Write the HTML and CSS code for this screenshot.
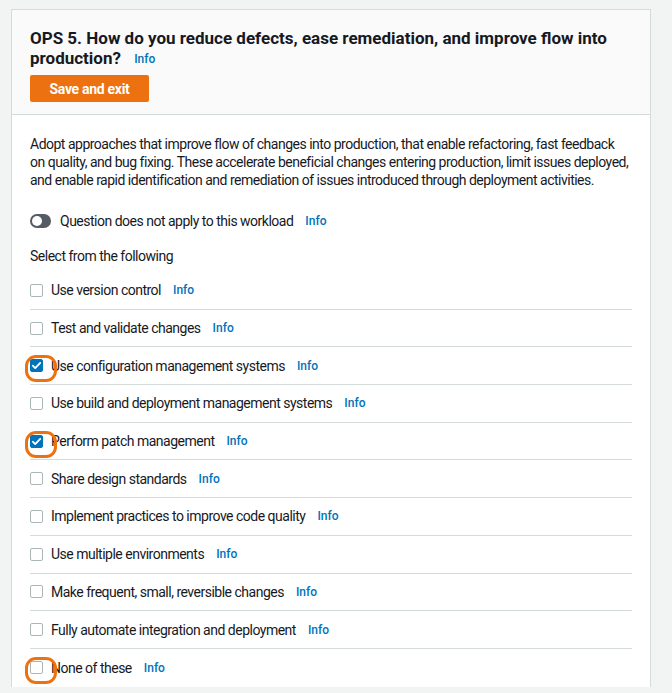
FILE: index.html
```html
<!DOCTYPE html>
<html>
<head>
<meta charset="utf-8">
<link rel="stylesheet" href="styles.css">
</head>
<body>
<div class="page">
  <section class="card">
    <header class="card-head">
      <h2 class="title">OPS 5. How do you reduce defects, ease remediation, and improve flow into production? <a class="info" href="#">Info</a></h2>
      <button class="btn-primary">Save and exit</button>
    </header>
    <div class="card-body">
      <p class="desc">Adopt approaches that improve flow of changes into production, that enable refactoring, fast feedback on quality, and bug fixing. These accelerate beneficial changes entering production, limit issues deployed, and enable rapid identification and remediation of issues introduced through deployment activities.</p>
      <div class="toggle-row">
        <span class="toggle"><span class="knob"></span></span>
        <span class="label">Question does not apply to this workload</span>
        <a class="info" href="#">Info</a>
      </div>
      <div class="select-label">Select from the following</div>
      <ul class="choices">
        <li class="choice"><span class="cb"></span><span class="label">Use version control</span><a class="info" href="#">Info</a></li>
        <li class="choice"><span class="cb"></span><span class="label">Test and validate changes</span><a class="info" href="#">Info</a></li>
        <li class="choice"><span class="cb checked focus"><svg viewBox="0 0 14 14"><path d="M3 7.2l2.6 2.6L11 4.2"/></svg></span><span class="label">Use configuration management systems</span><a class="info" href="#">Info</a></li>
        <li class="choice"><span class="cb"></span><span class="label">Use build and deployment management systems</span><a class="info" href="#">Info</a></li>
        <li class="choice"><span class="cb checked focus"><svg viewBox="0 0 14 14"><path d="M3 7.2l2.6 2.6L11 4.2"/></svg></span><span class="label">Perform patch management</span><a class="info" href="#">Info</a></li>
        <li class="choice"><span class="cb"></span><span class="label">Share design standards</span><a class="info" href="#">Info</a></li>
        <li class="choice"><span class="cb"></span><span class="label">Implement practices to improve code quality</span><a class="info" href="#">Info</a></li>
        <li class="choice"><span class="cb"></span><span class="label">Use multiple environments</span><a class="info" href="#">Info</a></li>
        <li class="choice"><span class="cb"></span><span class="label">Make frequent, small, reversible changes</span><a class="info" href="#">Info</a></li>
        <li class="choice"><span class="cb"></span><span class="label">Fully automate integration and deployment</span><a class="info" href="#">Info</a></li>
        <li class="choice"><span class="cb focus"></span><span class="label">None of these</span><a class="info" href="#">Info</a></li>
      </ul>
    </div>
  </section>
</div>
</body>
</html>
```
FILE: styles.css
```css
* { box-sizing: border-box; }
html, body { margin: 0; padding: 0; }
body {
  background: #f2f3f3;
  font-family: Roboto, "Liberation Sans", sans-serif;
  color: #16191f;
  font-size: 14px;
  line-height: 18px;
  letter-spacing: -0.5px;
}
.page { padding: 9px 21px 0 11px; }
.card {
  background: #fff;
  border: 1px solid #d5dbdb;
  border-bottom: none;
}
.card-head {
  background: #fafafa;
  border-bottom: 1px solid #d5dbdb;
  padding: 18px 18px 12px 18px;
}
.title {
  margin: 0 0 7px 0;
  font-size: 17px;
  line-height: 20px;
  font-weight: 700;
  letter-spacing: 0;
  color: #16191f;
}
.info {
  color: #0073bb;
  font-size: 12px;
  font-weight: 500;
  letter-spacing: 0;
  text-decoration: none;
  margin-left: 12px;
}
.title .info { margin-left: 9px; line-height: 16px; display: inline-block; vertical-align: 1px; }
.btn-primary {
  background: #ec7211;
  border: none;
  border-radius: 2px;
  color: #fff;
  font-family: inherit;
  font-size: 14px;
  font-weight: 700;
  letter-spacing: -0.3px;
  height: 27px;
  width: 119px;
  padding: 0;
}
.card-body { padding: 20px 18px 0 18px; }
.desc { margin: 0; max-width: 600px; }
.toggle-row {
  display: flex;
  align-items: center;
  height: 20px;
  margin-top: 22px;
}
.toggle {
  width: 21px;
  height: 14px;
  border-radius: 7px;
  background: #545b64;
  position: relative;
  margin-right: 9px;
  flex: none;
}
.knob {
  position: absolute;
  left: 2px;
  top: 2px;
  width: 10px;
  height: 10px;
  border-radius: 50%;
  background: #fff;
}
.select-label { margin-top: 16px; }
.choices { list-style: none; margin: 7px 0 0 0; padding: 0; }
.choice {
  display: flex;
  align-items: center;
  height: 37.7px;
  border-bottom: 1px solid #d5dbdb;
}
.choice:last-child { border-bottom: none; }
.cb {
  width: 13px;
  height: 13px;
  border: 1px solid #aab7b8;
  border-radius: 2px;
  margin-right: 8px;
  flex: none;
  position: relative;
  background: #fff;
}
.cb.checked { background: #0073bb; border-color: #0073bb; }
.cb svg { position: absolute; inset: -1px; width: 13px; height: 13px; }
.cb svg path { fill: none; stroke: #fff; stroke-width: 2; stroke-linecap: round; stroke-linejoin: round; }
.cb.focus::after {
  content: "";
  position: absolute;
  left: -6px;
  top: -5px;
  width: 26px;
  height: 21px;
  border: 3px solid #ec7211;
  border-radius: 11px;
}
```
